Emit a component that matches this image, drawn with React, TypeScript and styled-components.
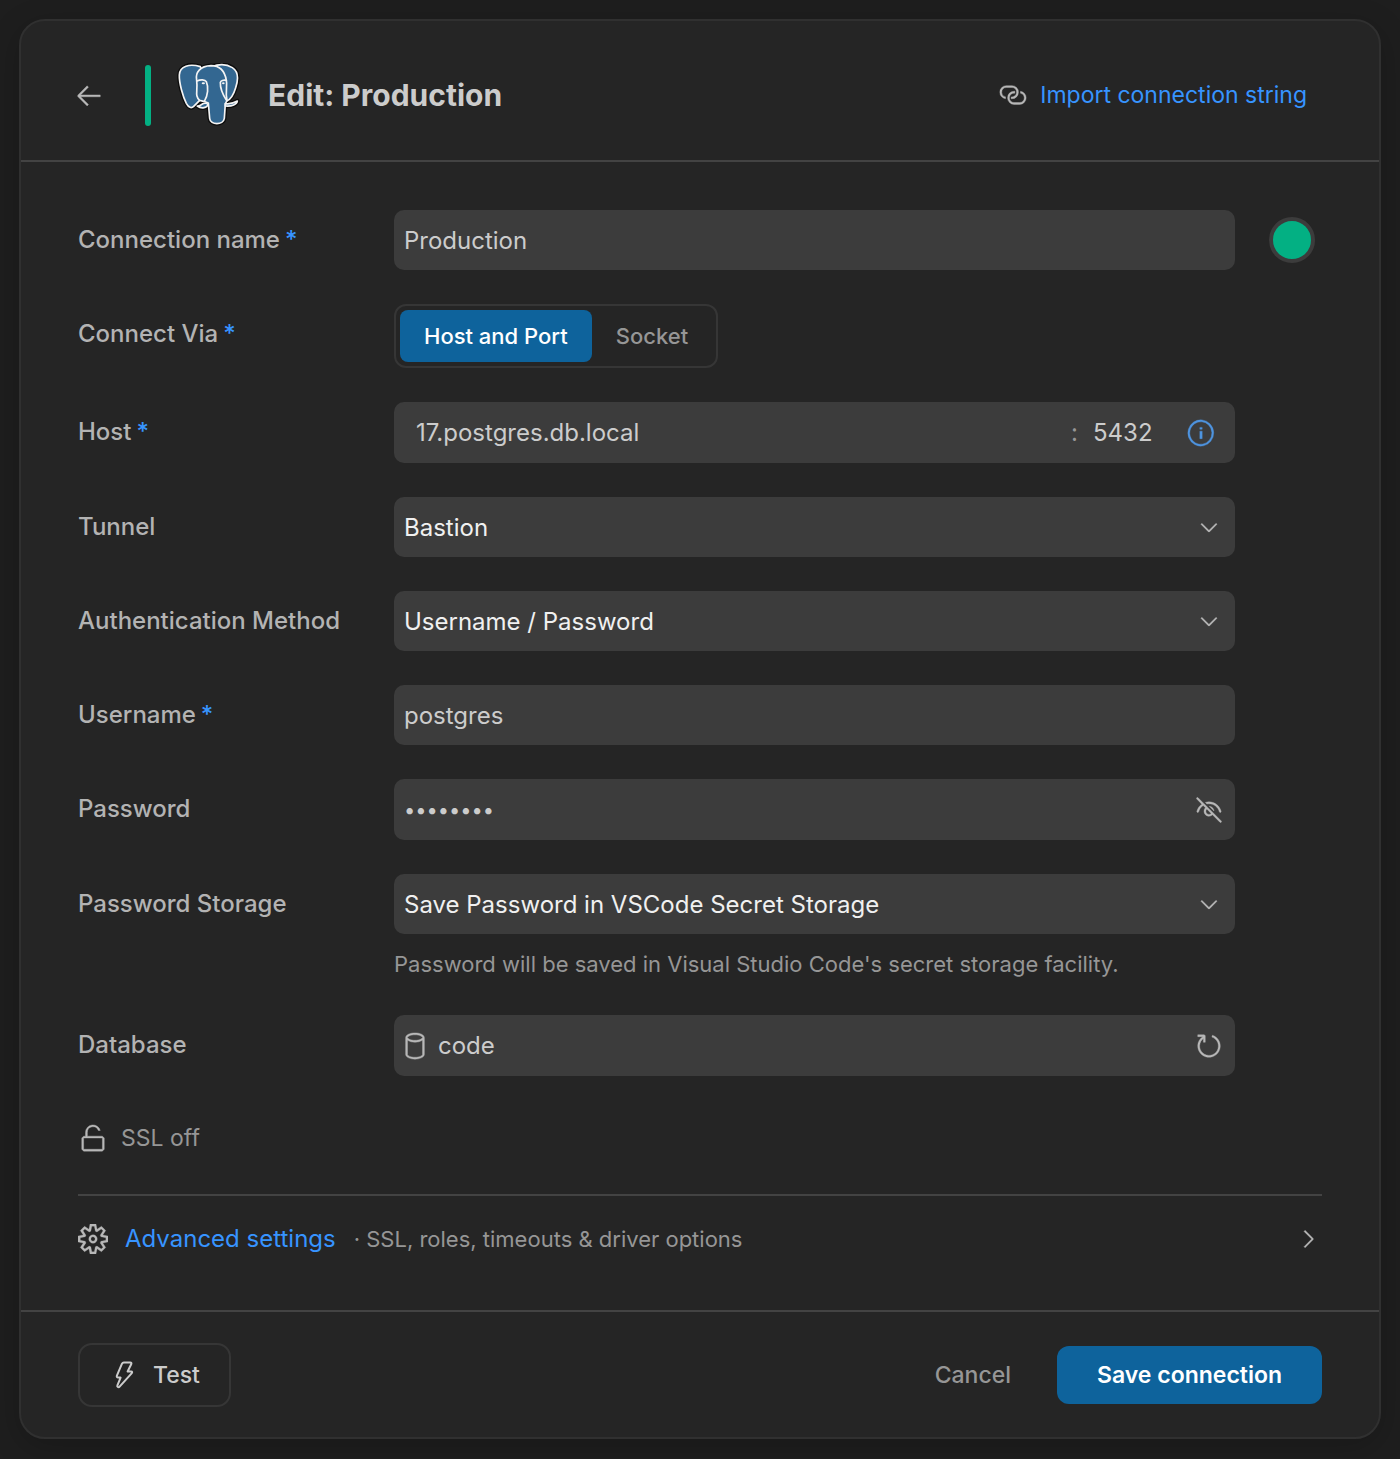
import React, { useState } from 'react';
import styled, { createGlobalStyle, css } from 'styled-components';
import {
  VscArrowLeft,
  VscLink,
  VscInfo,
  VscChevronDown,
  VscChevronRight,
  VscEyeClosed,
  VscRefresh,
  VscDatabase,
  VscUnlock,
  VscSettingsGear,
} from 'react-icons/vsc';

const color = {
  page: '#1e1e1e',
  card: '#252525',
  edge: '#303030',
  line: '#434343',
  field: '#3c3c3c',
  outline: '#363636',
  text: '#cccccc',
  label: '#b3b3b3',
  muted: '#969696',
  icon: '#b8b8b8',
  bright: '#f0f0f0',
  link: '#3794ff',
  primary: '#0e639c',
  accent: '#03b083',
};

const GlobalStyle = createGlobalStyle`
  *, *::before, *::after { box-sizing: border-box; }
  body {
    margin: 0;
    background: ${color.page};
    color: ${color.text};
    font-family: Inter, Roboto, sans-serif;
    font-size: 24px;
    line-height: 32px;
  }
  button, input, select { font: inherit; color: inherit; margin: 0; }
  svg path { stroke: currentColor; stroke-width: 0.2; }
`;

const Page = styled.main`
  padding: 19px;
`;

const Card = styled.form`
  border: 2px solid ${color.edge};
  border-radius: 26px;
  background: ${color.card};
  box-shadow: 0 8px 32px rgba(0, 0, 0, 0.2);
`;

const Header = styled.header`
  display: flex;
  align-items: center;
  padding: 42px 72px 33px 50px;
  border-bottom: 2px solid ${color.line};
`;

const bare = css`
  display: inline-flex;
  align-items: center;
  justify-content: center;
  padding: 0;
  border: 0;
  background: none;
  cursor: pointer;
`;

const IconButton = styled.button<{ $tone?: string }>`
  ${bare}
  flex: none;
  width: 32px;
  height: 32px;
  color: ${(p) => p.$tone ?? color.icon};
`;

const BackButton = styled(IconButton)`
  margin: 0 40px 0 2px;
`;

const Accent = styled.span`
  width: 6px;
  height: 61px;
  margin-right: 26px;
  border-radius: 3px;
  background: ${color.accent};
`;

const Title = styled.h1`
  flex: 1;
  margin: 0 0 0 27px;
  font-size: 30px;
  line-height: 40px;
  font-weight: 700;
`;

const LinkGroup = styled.a`
  display: inline-flex;
  align-items: center;
  gap: 12px;
  color: ${color.link};
  font-size: 23px;
  text-decoration: none;

  svg { color: ${color.icon}; }
`;

const Body = styled.div`
  padding: 48px 57px;
`;

const Rows = styled.div`
  display: grid;
  gap: 34px;
`;

const Row = styled.div`
  display: grid;
  grid-template-columns: 316px minmax(0, 1fr) 53px;
  align-items: start;
`;

const Label = styled.label`
  color: ${color.label};
  font-weight: 500;
  line-height: 60px;
`;

const Star = styled.span`
  color: ${color.link};
  margin-left: 5px;
`;

const Control = styled.div`
  margin-right: 34px;
`;

const TextField = styled.input`
  display: block;
  width: 100%;
  height: 60px;
  padding: 0 10px;
  border: 0;
  border-radius: 10px;
  background: ${color.field};
  outline: none;
`;

const Composite = styled.div<{ $left?: number; $right?: number }>`
  display: flex;
  align-items: center;
  height: 61px;
  padding: 0 ${(p) => p.$right ?? 10}px 0 ${(p) => p.$left ?? 10}px;
  border-radius: 10px;
  background: ${color.field};

  > svg { flex: none; margin-right: 8px; color: ${color.icon}; }
`;

const InnerField = styled.input<{ $width?: number }>`
  flex: ${(p) => (p.$width ? 'none' : '1')};
  width: ${(p) => (p.$width ? `${p.$width}px` : 'auto')};
  min-width: 0;
  height: 60px;
  padding: 0;
  border: 0;
  background: none;
  outline: none;
`;

const PasswordField = styled(InnerField)`
  font-size: 20px;
`;

const Colon = styled.span`
  margin-right: 15px;
  color: ${color.muted};
`;

const SelectWrap = styled.div`
  display: grid;
  align-items: center;

  > * { grid-area: 1 / 1; }
  > svg { justify-self: end; margin-right: 13px; pointer-events: none; color: ${color.icon}; }
`;

const Select = styled.select`
  appearance: none;
  width: 100%;
  height: 60px;
  padding: 2px 56px 0 10px;
  border: 0;
  border-radius: 10px;
  background: ${color.field};
  color: ${color.bright};
  outline: none;
`;

const Help = styled.p`
  margin: 14px 0 1px;
  color: ${color.muted};
  font-size: 22px;
`;

const Swatch = styled.button`
  ${bare}
  justify-self: end;
  align-self: center;
  width: 46px;
  height: 46px;
  margin-right: 7px;
  border: 4px solid ${color.field};
  border-radius: 50%;
  background: ${color.accent};
`;

const Segmented = styled.div`
  display: inline-flex;
  height: 64px;
  padding: 4px;
  border: 2px solid ${color.outline};
  border-radius: 12px;
  vertical-align: top;
`;

const Segment = styled.button<{ $on: boolean }>`
  ${bare}
  padding: 0 24px;
  border-radius: 8px;
  font-size: 22px;
  font-weight: 500;
  background: ${(p) => (p.$on ? color.primary : 'none')};
  color: ${(p) => (p.$on ? '#ffffff' : color.muted)};
`;

const SslRow = styled.div`
  display: flex;
  align-items: center;
  gap: 13px;
  padding: 46px 0 40px;
  color: ${color.muted};
  font-size: 23px;

  svg { color: ${color.icon}; }
`;

const Advanced = styled.button`
  ${bare}
  justify-content: flex-start;
  width: 100%;
  padding: 27px 0 1px;
  border-top: 2px solid ${color.line};
  line-height: 32px;

  > svg { flex: none; color: ${color.icon}; }
`;

const AdvancedName = styled.span`
  margin-left: 17px;
  color: ${color.link};
`;

const AdvancedHint = styled.span`
  flex: 1;
  margin-left: 18px;
  color: ${color.muted};
  font-size: 22px;
  text-align: left;
`;

const Footer = styled.footer`
  display: flex;
  align-items: center;
  padding: 31px 57px 30px;
  border-top: 2px solid ${color.line};
`;

const TestButton = styled.button`
  ${bare}
  gap: 14px;
  height: 64px;
  padding: 0 29px;
  margin-right: auto;
  border: 2px solid ${color.outline};
  border-radius: 14px;
  font-size: 23px;
  font-weight: 500;
`;

const CancelButton = styled.button`
  ${bare}
  margin-right: 46px;
  color: ${color.muted};
  font-size: 23px;
  font-weight: 500;
`;

const SaveButton = styled.button`
  ${bare}
  height: 58px;
  padding: 0 40px;
  border-radius: 12px;
  background: ${color.primary};
  color: #ffffff;
  font-size: 23px;
  font-weight: 600;
`;

const Elephant = styled.svg`
  flex: none;

  .shadow path { stroke: #0c0c0c; stroke-width: 13; }
  .lines path { stroke: #f4f4f4; stroke-width: 5; }
`;

const Bolt = styled.svg`
  path { stroke-width: 2; }
`;

const LEFT_EAR = 'M94 35C62 25 32 33 31 60C30 84 42 125 52 145C59 158 67 161 74 154L92 136L110 80Z';
const RIGHT_EAR = 'M128 35C150 27 174 28 190 38C209 50 208 74 200 98C194 118 184 134 173 138L150 90Z';
const FACE = 'M83 76C78 52 94 33 126 32C156 32 168 52 172 76C176 92 168 108 174 137L169 146L166 190C163 211 124 211 122 190L118 144L104 139L92 136C76 122 87 108 83 76Z';
const LEFT_TUSK = 'M85 153C92 154 96 150 100 147C106 143 114 145 117 148C115 158 98 163 85 153Z';
const RIGHT_TUSK = 'M169 146C180 148 192 145 205 138C204 148 189 155 169 153Z';

function PostgresLogo() {
  return (
    <Elephant width="64" height="64" viewBox="24 24 192 192" strokeLinecap="round" strokeLinejoin="round" role="img" aria-label="PostgreSQL">
      <g className="shadow" fill="#0c0c0c">
        <path d={LEFT_EAR} />
        <path d={RIGHT_EAR} />
        <path d={FACE} />
        <path d={LEFT_TUSK} />
        <path d={RIGHT_TUSK} />
      </g>
      <g className="lines" fill="#336791">
        <path d={LEFT_EAR} />
        <path d={RIGHT_EAR} />
        <path d={FACE} />
        <path d={LEFT_TUSK} />
        <path d={RIGHT_TUSK} />
        <g fill="none">
          <path d="M84 78C94 73 108 73 112 80C119 96 117 122 106 139" />
          <path d="M172 76C164 74 155 77 154 82C153 102 162 120 173 137" />
        </g>
      </g>
      <ellipse cx="103" cy="85" rx="5" ry="3" fill="#f4f4f4" />
      <ellipse cx="163" cy="85" rx="4" ry="3" fill="#f4f4f4" />
    </Elephant>
  );
}

function ZapIcon() {
  return (
    <Bolt width="30" height="30" viewBox="0 0 30 30" fill="none" strokeLinejoin="round" aria-hidden="true">
      <path d="M14.8 2.5H21.2Q23 2.5 22.2 4.2L18.6 11.5H22Q24 11.6 22.6 13.4L10.6 26.6Q9.8 27.6 8.8 27Q8 26.5 8.4 25.4L11.6 17.6H9.2Q7.3 17.4 7.9 15.6L13 3.7Q13.6 2.5 14.8 2.5Z" />
    </Bolt>
  );
}

const Required = () => <Star aria-hidden="true">*</Star>;

export default function App() {
  const [via, setVia] = useState('host');

  return (
    <>
      <GlobalStyle />
      <Page>
        <Card onSubmit={(e) => e.preventDefault()}>
          <Header>
            <BackButton type="button" aria-label="Back"><VscArrowLeft size={30} /></BackButton>
            <Accent />
            <PostgresLogo />
            <Title>Edit: Production</Title>
            <LinkGroup href="#import"><VscLink size={30} />Import connection string</LinkGroup>
          </Header>

          <Body>
            <Rows>
              <Row>
                <Label htmlFor="name">Connection name<Required /></Label>
                <Control><TextField id="name" defaultValue="Production" /></Control>
                <Swatch type="button" aria-label="Connection colour" />
              </Row>
              <Row>
                <Label as="span" id="via-label">Connect Via<Required /></Label>
                <Control>
                  <Segmented role="group" aria-labelledby="via-label">
                    <Segment type="button" $on={via === 'host'} onClick={() => setVia('host')}>Host and Port</Segment>
                    <Segment type="button" $on={via === 'socket'} onClick={() => setVia('socket')}>Socket</Segment>
                  </Segmented>
                </Control>
              </Row>
              <Row>
                <Label htmlFor="host">Host<Required /></Label>
                <Control>
                  <Composite $left={22} $right={18}>
                    <InnerField id="host" defaultValue="17.postgres.db.local" />
                    <Colon>:</Colon>
                    <InnerField $width={92} aria-label="Port" defaultValue="5432" />
                    <IconButton type="button" aria-label="Host help" $tone="#4e94e0"><VscInfo size={30} /></IconButton>
                  </Composite>
                </Control>
              </Row>
              <Row>
                <Label htmlFor="tunnel">Tunnel</Label>
                <Control>
                  <SelectWrap>
                    <Select id="tunnel"><option>Bastion</option></Select>
                    <VscChevronDown size={26} />
                  </SelectWrap>
                </Control>
              </Row>
              <Row>
                <Label htmlFor="auth">Authentication Method</Label>
                <Control>
                  <SelectWrap>
                    <Select id="auth"><option>Username / Password</option></Select>
                    <VscChevronDown size={26} />
                  </SelectWrap>
                </Control>
              </Row>
              <Row>
                <Label htmlFor="username">Username<Required /></Label>
                <Control><TextField id="username" defaultValue="postgres" /></Control>
              </Row>
              <Row>
                <Label htmlFor="password">Password</Label>
                <Control>
                  <Composite>
                    <PasswordField id="password" type="password" defaultValue="postgres" />
                    <IconButton type="button" aria-label="Show password"><VscEyeClosed size={30} /></IconButton>
                  </Composite>
                </Control>
              </Row>
              <Row>
                <Label htmlFor="storage">Password Storage</Label>
                <Control>
                  <SelectWrap>
                    <Select id="storage"><option>Save Password in VSCode Secret Storage</option></Select>
                    <VscChevronDown size={26} />
                  </SelectWrap>
                  <Help>Password will be saved in Visual Studio Code's secret storage facility.</Help>
                </Control>
              </Row>
              <Row>
                <Label htmlFor="database">Database</Label>
                <Control>
                  <Composite $left={6}>
                    <VscDatabase size={30} />
                    <InnerField id="database" defaultValue="code" />
                    <IconButton type="button" aria-label="Refresh databases"><VscRefresh size={30} /></IconButton>
                  </Composite>
                </Control>
              </Row>
            </Rows>

            <SslRow><VscUnlock size={30} />SSL off</SslRow>

            <Advanced type="button">
              <VscSettingsGear size={30} />
              <AdvancedName>Advanced settings</AdvancedName>
              <AdvancedHint>· SSL, roles, timeouts &amp; driver options</AdvancedHint>
              <VscChevronRight size={28} />
            </Advanced>
          </Body>

          <Footer>
            <TestButton type="button"><ZapIcon />Test</TestButton>
            <CancelButton type="button">Cancel</CancelButton>
            <SaveButton type="submit">Save connection</SaveButton>
          </Footer>
        </Card>
      </Page>
    </>
  );
}
